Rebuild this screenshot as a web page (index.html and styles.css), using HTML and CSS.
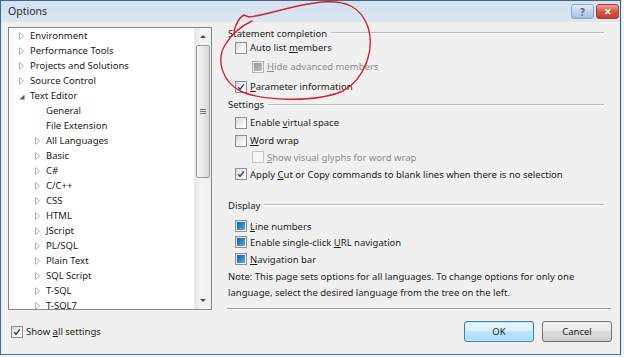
FILE: index.html
```html
<!DOCTYPE html>
<html>
<head>
<meta charset="utf-8">
<title>Options</title>
<link rel="stylesheet" href="styles.css">
</head>
<body>
<svg class="defs" width="0" height="0">
  <defs>
    <symbol id="tw-c" viewBox="0 0 5 8"><path d="M0.5 0.5 L4.5 4 L0.5 7.5 Z" fill="none" stroke="#b4b4b4"/></symbol>
    <symbol id="tw-e" viewBox="0 0 6 6"><path d="M5.5 0.5 L5.5 5.5 L0.5 5.5 Z" fill="#5a5a5a"/></symbol>
    <symbol id="chk" viewBox="0 0 12 12"><path d="M2.6 6.2 L4.8 8.8 L9.4 2.8" fill="none" stroke="#24407a" stroke-width="1.7"/></symbol>
  </defs>
</svg>
<div class="window">
  <div class="titlebar">
    <span class="title">Options</span>
    <div class="tbtns">
      <span class="tb help">?</span>
      <span class="tb close">✕</span>
    </div>
  </div>
  <div class="client">
    <div class="main">
      <div class="tree">
        <ul class="items">
          <li class="l0"><svg class="tw"><use href="#tw-c"/></svg>Environment</li>
          <li class="l0"><svg class="tw"><use href="#tw-c"/></svg>Performance Tools</li>
          <li class="l0"><svg class="tw"><use href="#tw-c"/></svg>Projects and Solutions</li>
          <li class="l0"><svg class="tw"><use href="#tw-c"/></svg>Source Control</li>
          <li class="l0"><svg class="tw open"><use href="#tw-e"/></svg>Text Editor</li>
          <li class="l1"><span class="tw"></span>General</li>
          <li class="l1"><span class="tw"></span>File Extension</li>
          <li class="l1"><svg class="tw"><use href="#tw-c"/></svg>All Languages</li>
          <li class="l1"><svg class="tw"><use href="#tw-c"/></svg>Basic</li>
          <li class="l1"><svg class="tw"><use href="#tw-c"/></svg>C#</li>
          <li class="l1"><svg class="tw"><use href="#tw-c"/></svg>C/C++</li>
          <li class="l1"><svg class="tw"><use href="#tw-c"/></svg>CSS</li>
          <li class="l1"><svg class="tw"><use href="#tw-c"/></svg>HTML</li>
          <li class="l1"><svg class="tw"><use href="#tw-c"/></svg>JScript</li>
          <li class="l1"><svg class="tw"><use href="#tw-c"/></svg>PL/SQL</li>
          <li class="l1"><svg class="tw"><use href="#tw-c"/></svg>Plain Text</li>
          <li class="l1"><svg class="tw"><use href="#tw-c"/></svg>SQL Script</li>
          <li class="l1"><svg class="tw"><use href="#tw-c"/></svg>T-SQL</li>
          <li class="l1"><svg class="tw"><use href="#tw-c"/></svg>T-SQL7</li>
        </ul>
        <div class="vscroll">
          <div class="sb-btn"><span class="arr up"></span></div>
          <div class="track">
            <div class="thumb"><span class="grip"></span></div>
          </div>
          <div class="sb-btn"><span class="arr down"></span></div>
        </div>
      </div>
      <div class="panel">
        <div class="group first"><span>Statement completion</span><span class="rule"></span></div>
        <div class="opt r1"><span class="box"></span><span>Auto list <u>m</u>embers</span></div>
        <div class="opt sub dis r2"><span class="box ind-gray"></span><span><u>H</u>ide advanced members</span></div>
        <div class="opt r3"><span class="box"><svg class="ck"><use href="#chk"/></svg></span><span><u>P</u>arameter information</span></div>

        <div class="group g2"><span>Settings</span><span class="rule"></span></div>
        <div class="opt r4"><span class="box"></span><span>Enable <u>v</u>irtual space</span></div>
        <div class="opt r5"><span class="box"></span><span><u>W</u>ord wrap</span></div>
        <div class="opt sub dis r6"><span class="box empty-dis"></span><span><u>S</u>how visual glyphs for word wrap</span></div>
        <div class="opt r6"><span class="box"><svg class="ck"><use href="#chk"/></svg></span><span>Apply <u>C</u>ut or Copy commands to blank lines when there is no selection</span></div>

        <div class="group g3"><span>Display</span><span class="rule"></span></div>
        <div class="opt r7"><span class="box ind-blue"></span><span><u>L</u>ine numbers</span></div>
        <div class="opt r8"><span class="box ind-blue"></span><span>Enable single-click <u>U</u>RL navigation</span></div>
        <div class="opt r6"><span class="box ind-blue"></span><span><u>N</u>avigation bar</span></div>
        <p class="note">Note: This page sets options for all languages. To change options for only one<br>language, select the desired language from the tree on the left.</p>
        <div class="sep"></div>
      </div>
    </div>
    <div class="footer">
      <div class="opt showall"><span class="box"><svg class="ck"><use href="#chk"/></svg></span><span>Show <u>a</u>ll settings</span></div>
      <button class="btn ok">OK</button>
      <button class="btn cancel">Cancel</button>
    </div>
  </div>
  <svg class="ink" width="624" height="357" viewBox="0 0 624 357">
    <path d="M234 31 C236 24 240 17 244 15 L249 17 C268 15 292 5 322 2 C346 0 361 7 368 27 C375 49 365 79 343 91 C315 103 262 101 240 91 C222 81 216 60 225 45 C231 35 241 26 252 21" fill="none" stroke="#d2232a" stroke-width="1.4" stroke-linecap="round"/>
  </svg>
</div>
</body>
</html>
```

FILE: styles.css
```css
* { box-sizing: border-box; }
html, body { margin: 0; padding: 0; }
body {
  width: 624px;
  height: 357px;
  overflow: hidden;
  background: #eef1f5;
  font-family: "Noto Sans", sans-serif;
  font-size: 9.5px;
  color: #1b1b1b;
}
.defs { position: absolute; }
.window {
  position: relative;
  width: 621px;
  height: 355px;
  border: 1px solid #45667e;
  border-bottom-color: #2c8595;
  border-right-color: #2b5f74;
  display: flex;
  flex-direction: column;
  background: #f0f0f0;
}
.titlebar {
  height: 21px;
  flex: none;
  display: flex;
  align-items: flex-start;
  justify-content: space-between;
  padding: 0 1px 0 7px;
  background: linear-gradient(#d3e1f1, #dbe6f3);
}
.title {
  font-size: 10.5px;
  line-height: 20px;
  color: #1d2733;
}
.tbtns { display: flex; gap: 2px; margin-top: 3px; }
.tb {
  width: 23px;
  height: 15px;
  border-radius: 3px;
  display: flex;
  align-items: center;
  justify-content: center;
  font-size: 10px;
  font-weight: bold;
  line-height: 1;
}
.help {
  border: 1px solid #8aa4c0;
  background: linear-gradient(#e6eef8, #bcd0e8 55%, #a9c2e0);
  color: #4a6a90;
}
.close {
  border: 1px solid #a04030;
  background: linear-gradient(#e9a397, #cf5a45 50%, #c2402a);
  color: #ffffff;
  font-size: 9px;
}
.client {
  flex: 1;
  display: flex;
  flex-direction: column;
  padding: 5px 8px 0 7px;
}
.main {
  display: flex;
  height: 283px;
  gap: 11px;
}
.tree {
  width: 204px;
  flex: none;
  border: 1px solid #828790;
  background: #ffffff;
  display: flex;
  overflow: hidden;
}
.items {
  flex: 1;
  list-style: none;
  margin: 0;
  padding: 0;
  overflow: hidden;
}
.items li {
  height: 15px;
  display: flex;
  align-items: center;
  white-space: nowrap;
  color: #1a1a1a;
}
.l0 { padding-left: 10px; }
.l1 { padding-left: 26px; }
.tw { width: 5px; height: 8px; flex: none; margin-right: 6px; }
.tw.open { width: 6px; height: 6px; margin-right: 5px; margin-top: 2px; }
.vscroll {
  width: 17px;
  flex: none;
  display: flex;
  flex-direction: column;
  background: linear-gradient(90deg, #e6e6e6, #f4f4f4 40%, #f0f0f0);
  border-left: 1px solid #ececec;
}
.sb-btn {
  height: 17px;
  flex: none;
  display: flex;
  align-items: center;
  justify-content: center;
}
.arr { width: 0; height: 0; border-left: 3px solid transparent; border-right: 3px solid transparent; }
.arr.up { border-bottom: 3px solid #4d4d4d; }
.arr.down { border-top: 3px solid #4d4d4d; }
.track { flex: 1; padding: 0 1px; }
.thumb {
  height: 133px;
  border: 1px solid #9a9a9a;
  border-radius: 2px;
  background: linear-gradient(90deg, #f3f3f3, #e8e8e8 50%, #d9d9d9);
  display: flex;
  align-items: center;
  justify-content: center;
}
.grip {
  width: 6px;
  height: 5px;
  border-top: 1px solid #777;
  border-bottom: 1px solid #777;
  position: relative;
}
.grip::after {
  content: "";
  position: absolute;
  left: 0; right: 0; top: 1px;
  border-top: 1px solid #777;
}
.panel {
  flex: 1;
  display: flex;
  flex-direction: column;
}
.group {
  height: 12px;
  display: flex;
  align-items: center;
  padding-left: 5px;
  padding-right: 8px;
  white-space: nowrap;
}
.group.g2 { margin-top: 4px; }
.group.g3 { margin-top: 17px; }
.rule {
  flex: 1;
  margin-left: 4px;
  border-top: 1px solid #b8bcc0;
  border-bottom: 1px solid #ffffff;
}
.opt {
  height: 16px;
  display: flex;
  align-items: center;
  margin-left: 12px;
  white-space: nowrap;
}
.opt.sub { margin-left: 29px; }
.opt.dis { color: #8c8c8c; }
.r1 { margin-top: 1px; }
.r2 { margin-top: 3px; }
.r3 { margin-top: 4px; }
.r4 { margin-top: 4px; }
.r5 { margin-top: 2px; }
.r6 { margin-top: 1px; }
.r7 { margin-top: 7px; }
.r8 { margin-top: 0; }
.box {
  width: 12px;
  height: 12px;
  flex: none;
  margin-right: 3px;
  border: 1px solid #8f8f8f;
  background: linear-gradient(135deg, #d8d8d8, #f4f4f4 60%, #ffffff);
  display: flex;
  align-items: center;
  justify-content: center;
}
.ck { width: 12px; height: 12px; }
.box.ind-blue::after {
  content: "";
  width: 8px;
  height: 8px;
  background: linear-gradient(135deg, #1f5f92, #2f8ac4 55%, #56b4e2);
}
.box.ind-gray { border-color: #b2b2b2; }
.box.ind-gray::after {
  content: "";
  width: 8px;
  height: 8px;
  background: linear-gradient(135deg, #9c9c9c, #bdbdbd);
}
.box.empty-dis { border-color: #c6c6c6; background: #f6f6f6; }
.note {
  margin: 2px 8px 0 5px;
  line-height: 16px;
  white-space: nowrap;
}
.sep {
  margin: 7px 1px 0 4px;
  border-top: 1px solid #a0a0a0;
  border-bottom: 1px solid #ffffff;
}
.footer {
  margin-top: 11px;
  height: 21px;
  display: flex;
  align-items: center;
}
.opt.showall { margin-left: 3px; margin-right: auto; }
.btn {
  width: 70px;
  height: 21px;
  border-radius: 3px;
  font-family: "Noto Sans", sans-serif;
  font-size: 9.5px;
  color: #1b1b1b;
  padding: 0;
  border: 1px solid #707070;
  background: linear-gradient(#f2f2f2, #ebebeb 45%, #dddddd 50%, #cfcfcf);
}
.btn.ok {
  border-color: #3c7fb1;
  background: linear-gradient(#eaf6fd, #d9f0fc 45%, #bee6fd 50%, #a7d9f5);
  box-shadow: inset 0 0 0 1px #c8e8f8;
}
.btn.cancel { margin-left: 8px; }
.ink {
  position: absolute;
  left: -1px;
  top: -1px;
  pointer-events: none;
}
```
